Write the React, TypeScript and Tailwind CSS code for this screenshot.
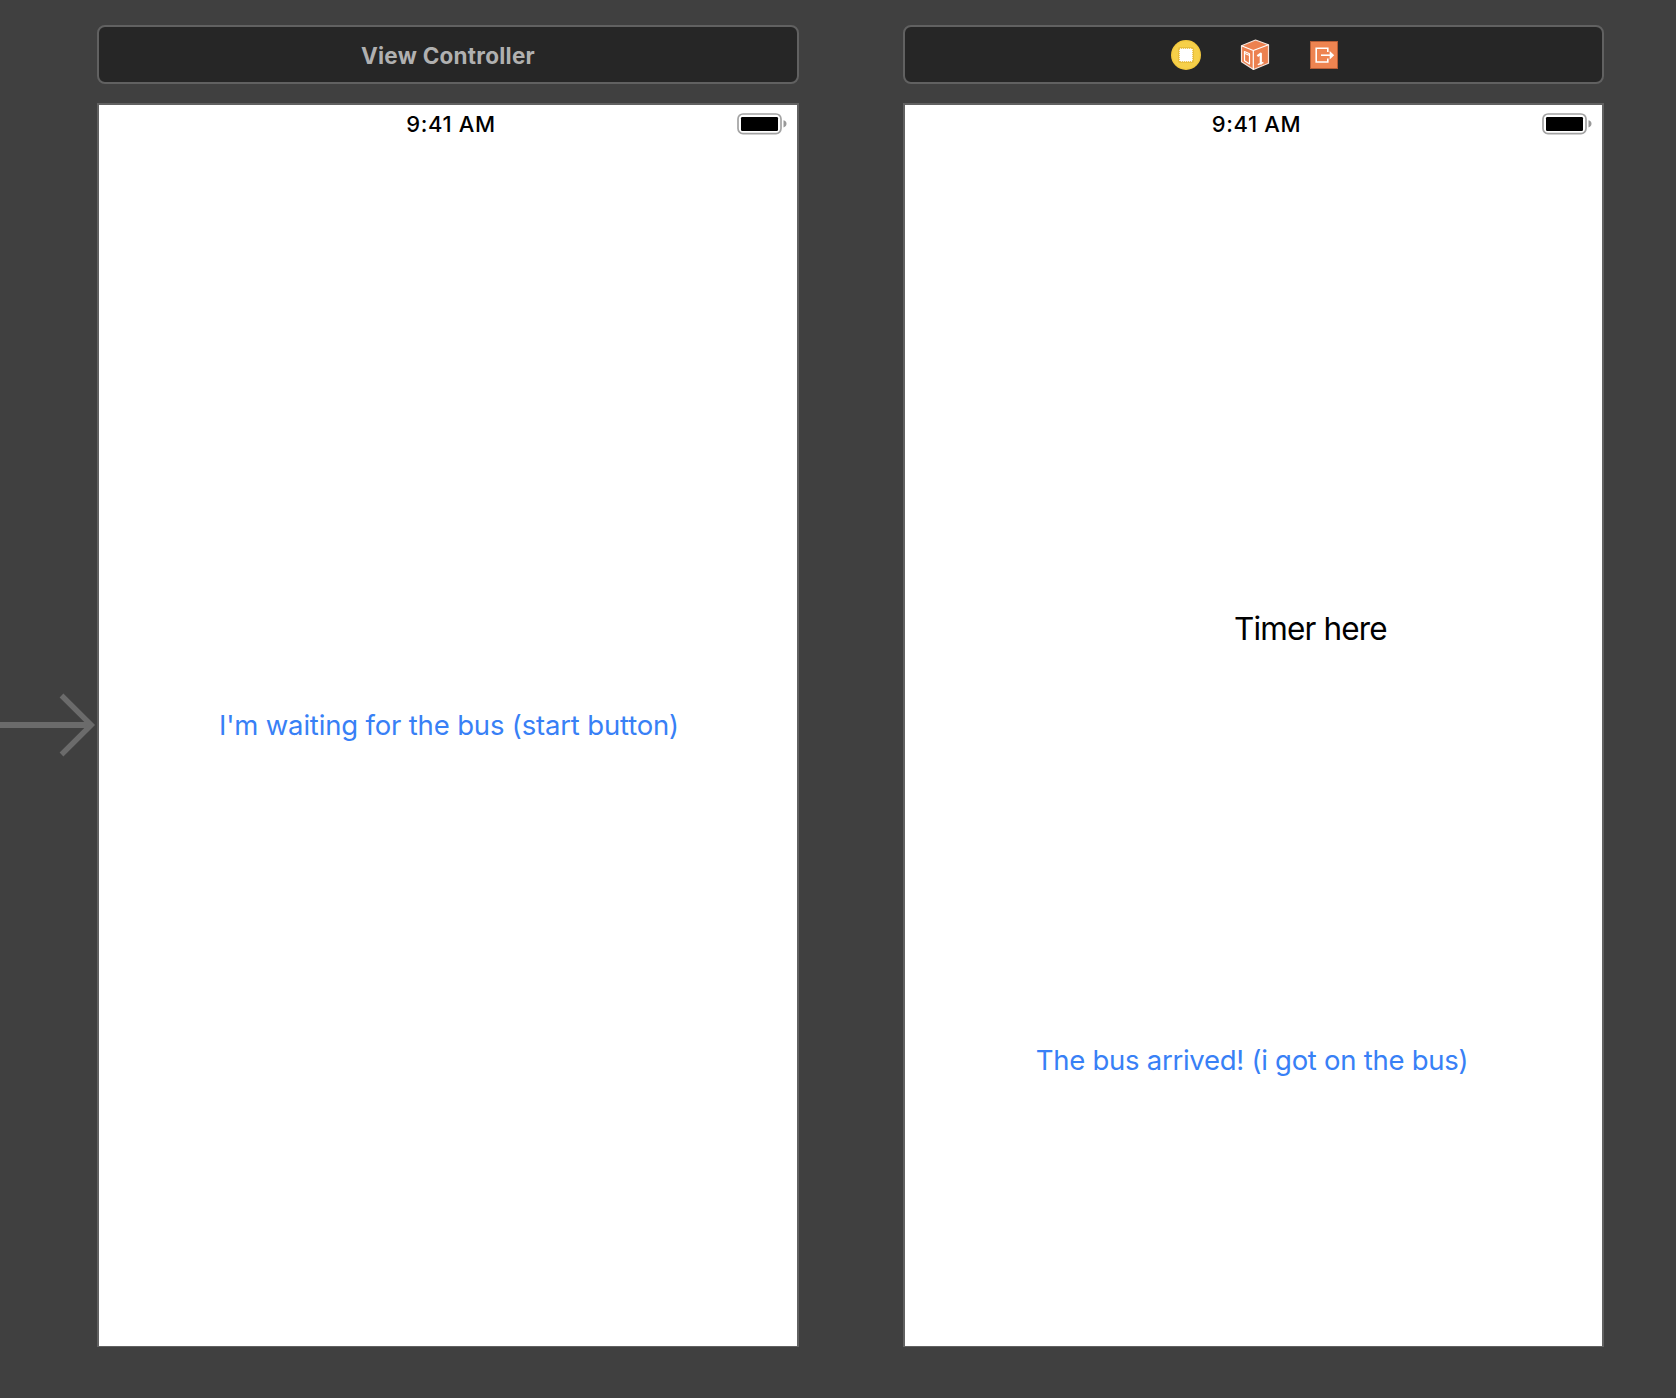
import type { ReactNode } from "react";

function Battery() {
  return (
    <svg width="52" height="22" viewBox="0 0 52 22" className="block">
      <rect x="1" y="1" width="43" height="19.6" rx="5" fill="#fff" stroke="#a3a3a3" strokeWidth="1.7" />
      <rect x="4" y="4" width="37" height="14" rx="1.2" fill="#000" />
      <path d="M46.5 7.2 Q49.5 8 49.5 10.8 Q49.5 13.6 46.5 14.4 Z" fill="#999" />
    </svg>
  );
}

function ControllerIcon() {
  return (
    <svg width="32" height="32" viewBox="0 0 32 32">
      <circle cx="16" cy="16" r="15" fill="#f3c93f" />
      <circle cx="16" cy="16" r="13.6" fill="#f6d04a" />
      <rect x="8" y="8" width="16" height="16" rx="2" fill="#e9bf3c" />
      <rect x="10" y="10" width="12" height="12" fill="#fff" stroke="#fff" strokeWidth="1.6" strokeDasharray="1.2 0.8" />
    </svg>
  );
}

function ResponderIcon() {
  return (
    <svg width="32" height="32" viewBox="0 0 32 32" strokeLinejoin="round">
      <path d="M16.5 1 29.5 5.8V24.3L14.5 30.5 2.5 22.8V6.7Z" fill="#ec8150" stroke="#f5e4dc" strokeWidth="1.2" />
      <path d="M2.5 6.7 14.3 11.5 29.5 5.8M14.3 11.5V30.5" fill="none" stroke="#fff" strokeWidth="1.2" />
      <path d="M5.5 12.5 10.5 14.7V25L5.5 21.8Z" fill="none" stroke="#fff" strokeWidth="1.2" />
      <path d="M6 14.5 10 16.2" stroke="#fff" strokeWidth="1.2" />
      <path d="M18.4 17.2 21.8 14.6V25.4" fill="none" stroke="#fff" strokeWidth="2.2" />
      <path d="M18.8 25.6 24.4 23.5" stroke="#fff" strokeWidth="1.4" />
    </svg>
  );
}

function ExitIcon() {
  return (
    <svg width="32" height="32" viewBox="0 0 32 32">
      <rect x="2.5" y="2.5" width="27" height="27" fill="#ee8451" stroke="#b65c35" />
      <path d="M19.8 13V9.2H8.2V23H19.8V19.4" fill="none" stroke="#fff" strokeWidth="1.6" />
      <path d="M13 16.2H23" stroke="#fff" strokeWidth="1.6" />
      <path d="M21.7 12 26.2 16.2 21.7 20.4Z" fill="#fff" />
    </svg>
  );
}

function Scene({ header, children }: { header: ReactNode; children: ReactNode }) {
  return (
    <section className="flex h-[1322px] flex-col gap-[19px]">
      <header className="flex h-[59px] items-center justify-center rounded-[8px] border-2 border-[#616161] bg-[#262626]">
        {header}
      </header>
      <div className="flex flex-1 flex-col border-2 border-b border-[#616161] bg-white">
        <div className="grid h-[38px] grid-cols-[1fr_auto_1fr] items-center">
          <span />
          <span className="translate-x-[3px] text-[22px] font-medium leading-none tracking-[0.65px] text-black">9:41 AM</span>
          <span className="flex justify-end pr-[8px]">
            <Battery />
          </span>
        </div>
        {children}
      </div>
    </section>
  );
}

export default function App() {
  return (
    <main className="relative grid h-[1398px] w-[1676px] grid-cols-[702px_701px] gap-[104px] overflow-hidden bg-[#404040] pl-[97px] pt-[25px] font-['Inter',sans-serif]">
      <svg width="97" height="64" viewBox="0 0 97 64" className="absolute left-0 top-[693px]" fill="none" stroke="#6b6b6b">
        <path d="M0 32H90" strokeWidth="6" />
        <path d="M61.5 2.5 91.2 32 61.5 61.5" strokeWidth="5.4" />
      </svg>
      <Scene
        header={
          <h1 className="pt-[3px] text-[22.5px] font-bold leading-none tracking-[0.25px] text-[#b0b0b0]">View Controller</h1>
        }
      >
        <button className="ml-[2px] mt-[562px] self-center whitespace-nowrap text-[27.5px] leading-[40px] tracking-[-0.17px] text-[#3880f6]">
          I'm waiting for the bus (start button)
        </button>
      </Scene>
      <Scene
        header={
          <div className="flex gap-[37px] pl-[2px]">
            <ControllerIcon />
            <ResponderIcon />
            <ExitIcon />
          </div>
        }
      >
        <p className="ml-[329px] mt-[466px] whitespace-nowrap text-[31.5px] leading-[40px] tracking-[-0.85px] text-black">
          Timer here
        </p>
        <button className="mr-[3px] mt-[391px] self-center whitespace-nowrap text-[27.5px] leading-[40px] tracking-[-0.27px] text-[#3880f6]">
          The bus arrived! (i got on the bus)
        </button>
      </Scene>
    </main>
  );
}
